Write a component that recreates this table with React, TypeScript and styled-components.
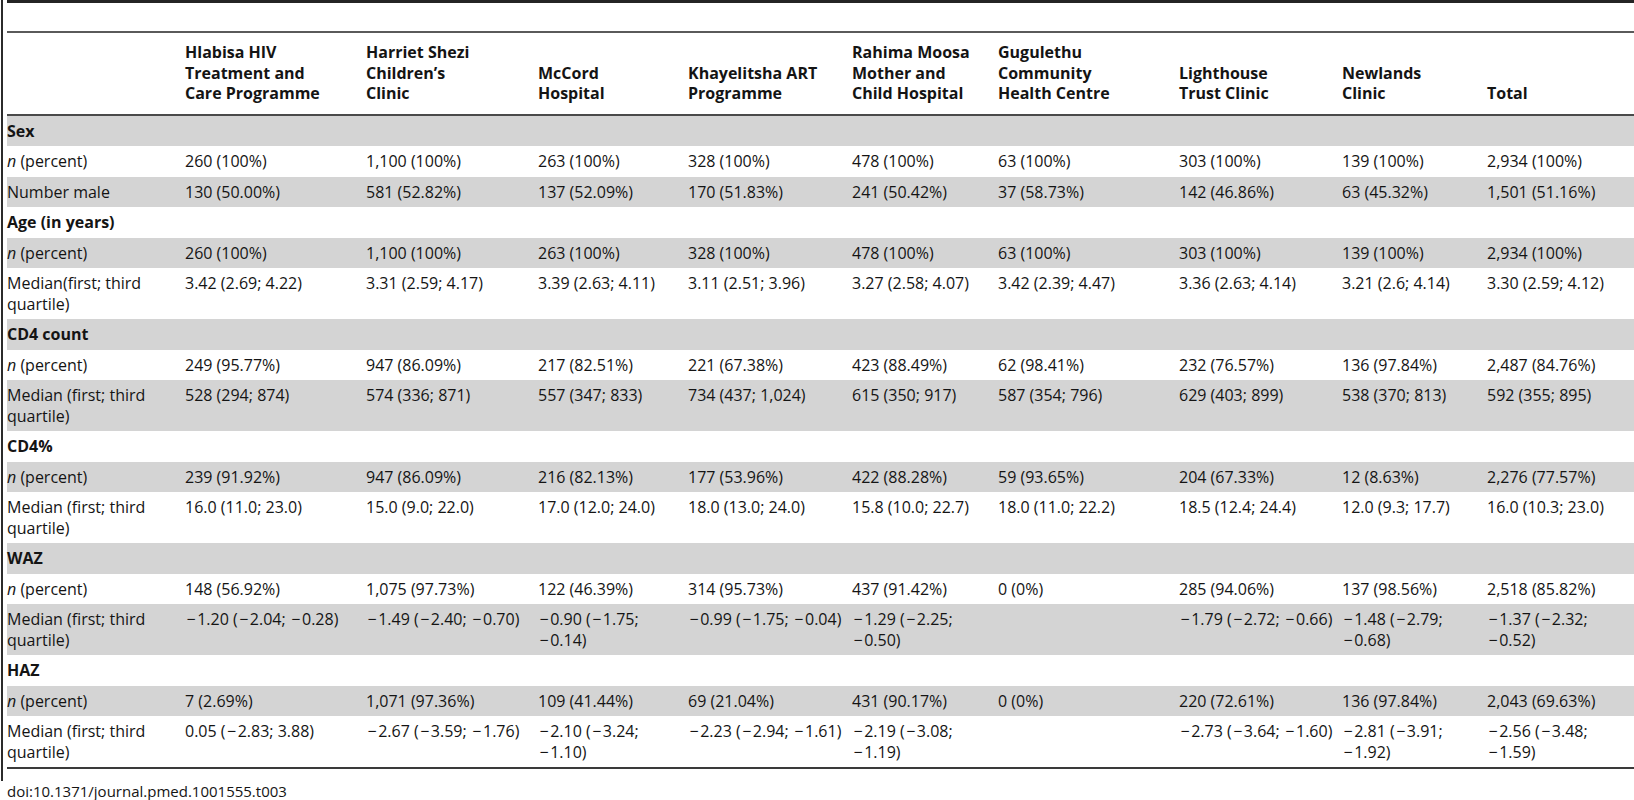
import React from "react";
import styled, { createGlobalStyle } from "styled-components";

const GlobalStyle = createGlobalStyle`
  body {
    margin: 0;
    background: #fff;
    color: #141414;
    font-family: "Open Sans", "Liberation Sans", sans-serif;
  }
`

const Frame = styled.div`
  margin-left: 1px;
  border-left: 2px solid #2b2b2b;
  padding-left: 4px;
  padding-bottom: 12px;
`

const TableBox = styled.div`
  border-top: 3px solid #242424;
  padding-top: 28px;
`

const Table = styled.table`
  width: 1627px;
  table-layout: fixed;
  border-collapse: collapse;
  font-size: 16px;
  line-height: 20.5px;
  border-bottom: 2px solid #3a3a3a;
`

const HeadRow = styled.tr`
  border-top: 2px solid #5a5a5a;
  border-bottom: 2px solid #4a4a4a;
`

const HeadCell = styled.th`
  text-align: left;
  vertical-align: bottom;
  font-weight: 700;
  padding: 9px 0 10px;
  white-space: nowrap;
`

const Row = styled.tr`
  &:nth-child(odd) {
    background: #d4d4d4;
  }
`

const Cell = styled.td<{ $section?: boolean }>`
  padding: 5px 0;
  vertical-align: top;
  white-space: nowrap;
  font-weight: ${(p) => (p.$section ? 700 : 400)};
`

const Minus = styled.span`
  padding: 0 1.5px;
`

const Doi = styled.div`
  padding-left: 7px;
  font-size: 15px;
  line-height: 20px;
`

const widths = [178, 181, 172, 150, 164, 146, 181, 163, 145, 147];

const heads = [
  "",
  "Hlabisa HIV|Treatment and|Care Programme",
  "Harriet Shezi|Children’s|Clinic",
  "McCord|Hospital",
  "Khayelitsha ART|Programme",
  "Rahima Moosa|Mother and|Child Hospital",
  "Gugulethu|Community|Health Centre",
  "Lighthouse|Trust Clinic",
  "Newlands|Clinic",
  "Total",
];

type Line = { label: string; italicN?: boolean; values?: string[] };

const nPct = (v: string[]): Line => ({ label: " (percent)", italicN: true, values: v });

const lines: Line[] = [
  { label: "Sex" },
  nPct(["260 (100%)", "1,100 (100%)", "263 (100%)", "328 (100%)", "478 (100%)", "63 (100%)", "303 (100%)", "139 (100%)", "2,934 (100%)"]),
  { label: "Number male", values: ["130 (50.00%)", "581 (52.82%)", "137 (52.09%)", "170 (51.83%)", "241 (50.42%)", "37 (58.73%)", "142 (46.86%)", "63 (45.32%)", "1,501 (51.16%)"] },
  { label: "Age (in years)" },
  nPct(["260 (100%)", "1,100 (100%)", "263 (100%)", "328 (100%)", "478 (100%)", "63 (100%)", "303 (100%)", "139 (100%)", "2,934 (100%)"]),
  { label: "Median(first; third|quartile)", values: ["3.42 (2.69; 4.22)", "3.31 (2.59; 4.17)", "3.39 (2.63; 4.11)", "3.11 (2.51; 3.96)", "3.27 (2.58; 4.07)", "3.42 (2.39; 4.47)", "3.36 (2.63; 4.14)", "3.21 (2.6; 4.14)", "3.30 (2.59; 4.12)"] },
  { label: "CD4 count" },
  nPct(["249 (95.77%)", "947 (86.09%)", "217 (82.51%)", "221 (67.38%)", "423 (88.49%)", "62 (98.41%)", "232 (76.57%)", "136 (97.84%)", "2,487 (84.76%)"]),
  { label: "Median (first; third|quartile)", values: ["528 (294; 874)", "574 (336; 871)", "557 (347; 833)", "734 (437; 1,024)", "615 (350; 917)", "587 (354; 796)", "629 (403; 899)", "538 (370; 813)", "592 (355; 895)"] },
  { label: "CD4%" },
  nPct(["239 (91.92%)", "947 (86.09%)", "216 (82.13%)", "177 (53.96%)", "422 (88.28%)", "59 (93.65%)", "204 (67.33%)", "12 (8.63%)", "2,276 (77.57%)"]),
  { label: "Median (first; third|quartile)", values: ["16.0 (11.0; 23.0)", "15.0 (9.0; 22.0)", "17.0 (12.0; 24.0)", "18.0 (13.0; 24.0)", "15.8 (10.0; 22.7)", "18.0 (11.0; 22.2)", "18.5 (12.4; 24.4)", "12.0 (9.3; 17.7)", "16.0 (10.3; 23.0)"] },
  { label: "WAZ" },
  nPct(["148 (56.92%)", "1,075 (97.73%)", "122 (46.39%)", "314 (95.73%)", "437 (91.42%)", "0 (0%)", "285 (94.06%)", "137 (98.56%)", "2,518 (85.82%)"]),
  { label: "Median (first; third|quartile)", values: ["−1.20 (−2.04; −0.28)", "−1.49 (−2.40; −0.70)", "−0.90 (−1.75;|−0.14)", "−0.99 (−1.75; −0.04)", "−1.29 (−2.25;|−0.50)", "", "−1.79 (−2.72; −0.66)", "−1.48 (−2.79;|−0.68)", "−1.37 (−2.32;|−0.52)"] },
  { label: "HAZ" },
  nPct(["7 (2.69%)", "1,071 (97.36%)", "109 (41.44%)", "69 (21.04%)", "431 (90.17%)", "0 (0%)", "220 (72.61%)", "136 (97.84%)", "2,043 (69.63%)"]),
  { label: "Median (first; third|quartile)", values: ["0.05 (−2.83; 3.88)", "−2.67 (−3.59; −1.76)", "−2.10 (−3.24;|−1.10)", "−2.23 (−2.94; −1.61)", "−2.19 (−3.08;|−1.19)", "", "−2.73 (−3.64; −1.60)", "−2.81 (−3.91;|−1.92)", "−2.56 (−3.48;|−1.59)"] },
];

// "|" marks a line break, minus signs get a little air like the print version
function Text({ value }: { value: string }) {
  const parts = value.split("|");
  return (
    <>
      {parts.map((part, i) => (
        <React.Fragment key={i}>
          {i > 0 && <br />}
          {part.split("−").map((bit, j) => (
            <React.Fragment key={j}>
              {j > 0 && <Minus>−</Minus>}
              {bit}
            </React.Fragment>
          ))}
        </React.Fragment>
      ))}
    </>
  );
}

export default function App() {
  return (
    <>
      <GlobalStyle />
      <Frame>
        <TableBox>
          <Table>
            <colgroup>
              {widths.map((w, i) => (
                <col key={i} style={{ width: w }} />
              ))}
            </colgroup>
            <thead>
              <HeadRow>
                {heads.map((h, i) => (
                  <HeadCell key={i}>
                    <Text value={h} />
                  </HeadCell>
                ))}
              </HeadRow>
            </thead>
            <tbody>
              {lines.map((line, i) => (
                <Row key={i}>
                  <Cell $section={!line.values}>
                    {line.italicN && <i>n</i>}
                    <Text value={line.label} />
                  </Cell>
                  {Array.from({ length: 9 }).map((_, j) => (
                    <Cell key={j}>
                      {line.values ? <Text value={line.values[j]} /> : null}
                    </Cell>
                  ))}
                </Row>
              ))}
            </tbody>
          </Table>
        </TableBox>
      </Frame>
      <Doi>doi:10.1371/journal.pmed.1001555.t003</Doi>
    </>
  );
}
